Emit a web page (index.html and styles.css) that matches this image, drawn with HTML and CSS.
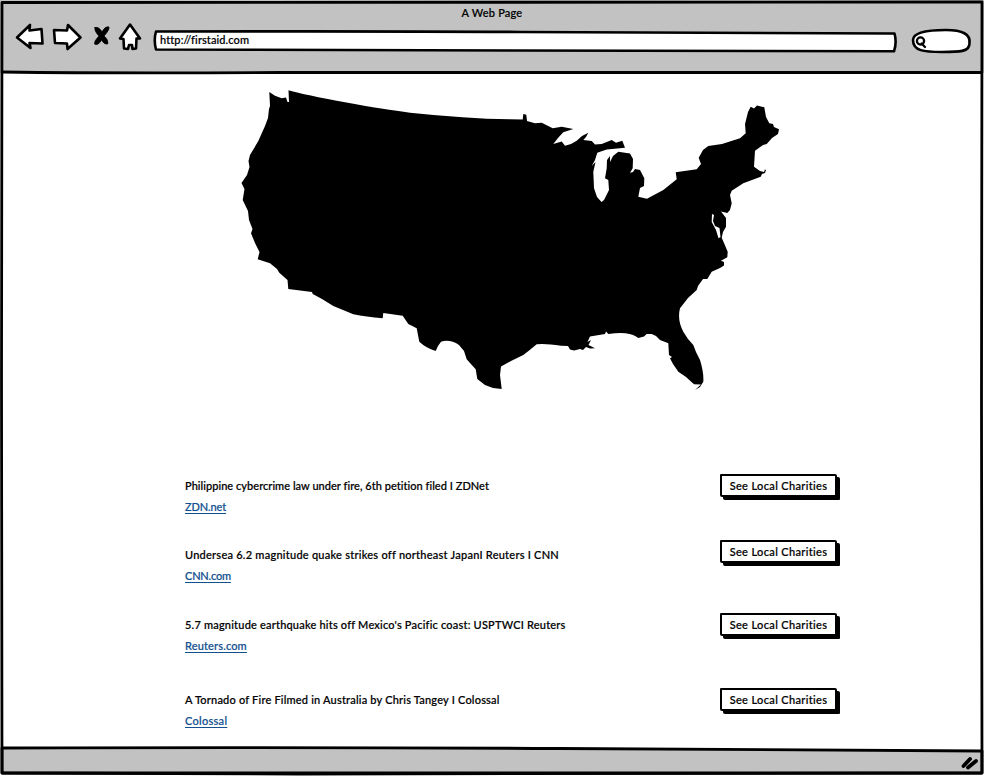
FILE: index.html
```html
<!DOCTYPE html>
<html lang="en">
<head>
<meta charset="utf-8">
<title>A Web Page</title>
<link rel="stylesheet" href="styles.css">
</head>
<body>
<div class="window">
  <header class="chrome">
    <div class="title"><span id="title">A Web Page</span></div>
    <div class="toolbar">
      <svg class="nav" width="134" height="34" viewBox="12 20 134 34">
        <path d="M17 37.5 30 25 29.500 30.500 41.500 29 42.500 43.500 29.500 43 30.500 48Z"/>
        <path d="M54 30 67 30.500 68 25 80.500 37.500 67.500 49 67 43.500 55 43Z"/>
        <path class="cross" d="M95 27.500Q99 26.500 102 32Q105 26 109 27Q109.500 30 104 36Q108 39 108 43.500Q105 45.500 101.500 40Q98 46 94.500 44Q94 41 99 36Q94 31 95 27.500Z"/>
        <path d="M130 24.500 140 38.500 136.500 38.500 136 48.500 132.500 49 132 45 129 45 128 49 124 48.500 123.500 39 120 38.500Z"/>
      </svg>
      <div class="address">
        <svg width="744" height="24" viewBox="153 29 744 24"><path d="M156 31.500 Q400 31 520 32 T894.500 33.500 Q897 42 894 51.300 Q700 51.500 510 50.500 T156 49.500 Q153.500 40 156 31.500Z"/></svg>
        <span class="url">http://firstaid.com</span>
      </div>
      <svg class="search" width="62" height="28" viewBox="910 27 62 28">
        <path d="M913 40C913 32 928 30 946 30Q971 30 969.500 43C970 52 959 52 942 52C924 52 913 51 913 40Z"/>
        <circle cx="920.500" cy="41" r="3.600"/><path d="M921.500 43.500 925 47"/>
      </svg>
    </div>
  </header>
  <main class="page">
    <svg class="map" width="540" height="302" viewBox="240 90 540 302">
      <path d="M269.300 92 275 95.700 281.700 98.300 286 97.500 287.500 102 289 102 288.500 90.300Q305 95 345 102.300 T410 112.700 Q465 118.500 510 119.300L522.700 119.500 523.300 114 526.300 114.700 527 121 535 123.300 541.700 122.700 552.700 128.300 561.700 126.700 573.300 129 563.300 132.300 558 138 553.300 144 561.700 141.500 565 145.700 571 144 576.700 140.700 582 136 588.300 132.700 586 137 583.300 140 591.700 141 595 144.500 601.700 144 611.700 140 616 142.700 622.300 140.700 625 147.700 606.700 149.500 597.300 152.700 595 160 591.700 166 595.500 162 593.300 171.700 594 188.300 597 197 601.500 202 604 200 609 190 608.300 180 605 178.300 606.700 168.300 607 160 610 156 610 162 613 156 618.300 151.700 630 153.500 633 159 632.700 168.300 630 172.700 633 172 635 169 640 170 644.300 178.300 644 186 640 188 638.300 196.700 647 198.700 663.300 190 676.700 179.300 675.700 172.300 696.700 169.300 701 164 698.700 157.700 703 150 708.300 146 722 144 740 138.300 745.700 133.300 745 124 748 112 750.700 106.700 754 108.500 757 105.500 764.300 107.300 766 117 769.300 123.300 773 124 774 127 779 129.300 778 134 772 138 766.700 144 763 145 755 150.700 754 166.700 760 171 764 172 765 169.500 762 168.500 766 170 765 173 762 174 760.700 176.700 743.300 183.300 731.700 190.700 730 195 731.700 203.300 730 210 727.300 213 721 211.500 726 218 726 226.700 723 232 721.700 237.700 724 243 727.700 251.700 727.300 257.300 721 260.700 724 262 724 265.500 720 268 711.700 271.700 707.300 279 703 279 698 286 696.700 290 688 298 680 308.300Q677 320 683.300 331.700L688 339 693.300 345 696 352 700 360Q704 373 703.300 381.700L700 387 695 390 701 384.500 694 384.300 686 377 678.300 371.700 673 364 670 358.300 672 357 669 355 668.300 343.300 660 340 656 336 651.700 334 646.700 334 644 336.500 638.300 338 636 336.500 Q628 331 608.300 334L606 331.500 605 334 590 336.500 587.500 342 591 340 588.500 345 595 348.300 590 348.500 586 347 583 350 580 349 574 350.500 570 349.500 568 346 561 345.700Q546 343.500 536.700 344.300Q530 350 523.300 355L511 361 501 366.500 500 375 501.700 389 493 388 485 385 477.300 379 475.700 369.300 470 363 466.700 359.300 464 351 459 345Q450 339 441 341.700L438 346 435.700 351Q426 348 419.300 341.700L416.700 328.300 408.300 324 402.700 315.700 383.300 313 382.700 318.300Q366 317 353.300 314.300L343 310 333.300 306 322 299 312.700 294 312 292 288.300 289 287.500 280 279.300 272.700 277 269 270 263.300 257.700 259.300 259.500 252 255 243 251 233.300 252.500 229 249 220 248 211 242.700 200 244.500 189 241.500 183 247 175 249.500 167 248.500 161 250 155 258.300 141 265 126 268 118 269 109 270 106Z"/>
      <path class="bay" d="M712 214 711.700 222 716 230 718.500 238.300 720.500 237 719.500 228 715 226 713 221 714 215Z"/>
    </svg>
    <ul class="news">
      <li class="item"><div class="story"><p><span class="s1">Philippine cybercrime law under fire, 6th petition filed I ZDNet</span></p><a class="l1">ZDN.net</a></div><button>See Local Charities</button></li>
      <li class="item"><div class="story"><p><span class="s2">Undersea 6.2 magnitude quake strikes off northeast JapanI Reuters I CNN</span></p><a class="l2">CNN.com</a></div><button class="raised">See Local Charities</button></li>
      <li class="item"><div class="story"><p><span class="s3">5.7 magnitude earthquake hits off Mexico's Pacific coast: USPTWCI Reuters</span></p><a class="l3">Reuters.com</a></div><button>See Local Charities</button></li>
      <li class="item last"><div class="story"><p><span class="s4">A Tornado of Fire Filmed in Australia by Chris Tangey I Colossal</span></p><a class="l4">Colossal</a></div><button>See Local Charities</button></li>
    </ul>
  </main>
  <svg class="frame" width="984" height="776" viewBox="0 0 984 776">
    <path class="status" d="M2 748 Q300 747 560 748.500 T982 751V773H2Z"/>
    <path d="M2 2.500 Q300 1.500 982 2 L981.500 400 982 773 Q700 772 300 774 L2 773 1.500 380Z"/>
    <path d="M2 72 Q120 73.500 280 72.500 T982 72.500"/>
    <path class="grip" d="M963.500 766 970 759 M968 767.500 976 761"/>
  </svg>
</div>
</body>
</html>
```
FILE: styles.css
```css
* { box-sizing: border-box; }
body { margin: 0; background: #fff; color: #000; font: 500 11px/16px Lato, "Liberation Sans", sans-serif; -webkit-text-stroke: .2px currentColor; }
.window { position: relative; width: 984px; height: 776px; overflow: hidden; display: flex; flex-direction: column; }
.chrome { height: 73px; background: #c2c2c2; flex: none; }
.title { padding-top: 5px; height: 20px; text-align: center; letter-spacing: .2px; }
.toolbar { display: flex; align-items: flex-start; padding-left: 12px; }
svg { display: block; }
.nav, .search, .address svg { fill: #fff; stroke: #000; stroke-width: 2.6; stroke-linejoin: round; stroke-linecap: round; }
.nav .cross { fill: #000; stroke-width: .8; }
.search circle, .search path:last-child { fill: none; stroke-width: 2.3; }
.address { display: grid; margin: 9px 0 0 7px; }
.address svg, .url { grid-area: 1 / 1; }
.url { padding: 3px 0 0 7px; letter-spacing: .1px; white-space: nowrap; z-index: 1; }
.search { margin: 7px 0 0 13px; }
.page { padding: 17px 0 0 185px; }
.map { margin-left: 55px; }
.bay { fill: #fff; }
.news { list-style: none; margin: 82px 0 0; padding: 0; width: 655px; }
.item { height: 70px; display: flex; justify-content: space-between; align-items: flex-start; }
.item:first-child { height: 69px; }
.item:nth-child(3) { height: 75px; }
.story { display: flex; flex-direction: column; align-items: flex-start; padding-top: 4px; }
.story p { margin: 0 0 5px; white-space: nowrap; }
.s1 { letter-spacing: .04px; }
.s2 { letter-spacing: .25px; }
.s3 { letter-spacing: .2px; }
.s4 { letter-spacing: .2px; }
.l1 { letter-spacing: -.12px; }
.l2 { letter-spacing: -.2px; }
.l3 { letter-spacing: .15px; }
.l4 { letter-spacing: .28px; }
.story a { color: #12508f; text-decoration: underline; text-underline-offset: 2px; }
button { width: 117px; height: 23px; margin-right: 3px; padding: 0; font: inherit; color: #000; background: #fff; border: 2px solid #000; border-radius: 1px 2px 1px 2px; box-shadow: 3px 3px 0 #000; white-space: nowrap; letter-spacing: .35px; }
.raised { margin-top: -3px; }
.frame { position: absolute; inset: 0; pointer-events: none; fill: none; stroke: #000; stroke-width: 2.8; stroke-linejoin: round; }
.frame .status { fill: #c2c2c2; }
.frame .grip { stroke-width: 3.8; stroke-linecap: round; }
```
